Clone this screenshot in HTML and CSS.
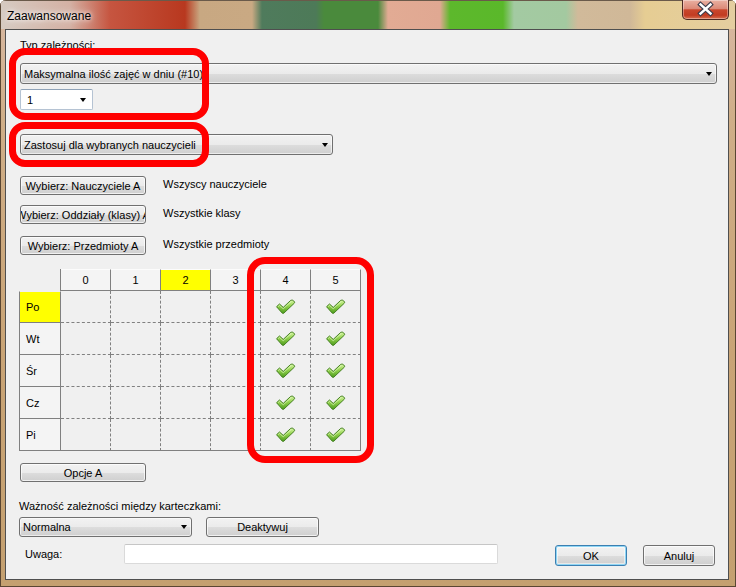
FILE: index.html
```html
<!DOCTYPE html>
<html lang="pl">
<head>
    <meta charset="UTF-8">
    <meta name="viewport" content="width=device-width, initial-scale=1.0">
    <title>Zaawansowane</title>
    <link rel="stylesheet" href="styles.css">
</head>
<body>
    <svg class="defs" width="0" height="0" aria-hidden="true">
        <defs>
            <linearGradient id="tickFill" x1="0" y1="0" x2="0" y2="1">
                <stop offset="0" stop-color="#d8f7a6"/>
                <stop offset="0.45" stop-color="#92d14c"/>
                <stop offset="1" stop-color="#4c9b1c"/>
            </linearGradient>
            <symbol id="tick" viewBox="0 0 22 17">
                <path d="M1.5 8.2 L4.6 5.3 L8.6 8.9 L16.6 1.4 Q18.2 0.6 19.6 1.9 L20.6 3.2 Q20.9 3.9 20.3 4.5 L9.3 15 Q8.4 15.8 7.5 15 Z"
                      fill="url(#tickFill)" stroke="#3e7b1b" stroke-width="1" stroke-linejoin="round"/>
                <path d="M3.2 8.1 L4.6 6.8 L8.6 10.4 L17.4 2.4" fill="none" stroke="#ecffd2" stroke-width="0.8" opacity="0.8"/>
            </symbol>
        </defs>
    </svg>

    <div class="window">
        <div class="titlebar">
            <span class="title">Zaawansowane</span>
            <div class="close-btn">
                <svg width="45" height="18" viewBox="0 0 45 18">
                    <path d="M17.5 4.5 L27.5 13.5 M27.5 4.5 L17.5 13.5" stroke="#3b3b4a" stroke-width="4.6" stroke-linecap="square"/>
                    <path d="M17.5 4.5 L27.5 13.5 M27.5 4.5 L17.5 13.5" stroke="#ffffff" stroke-width="2.4" stroke-linecap="square"/>
                </svg>
            </div>
        </div>

        <div class="client">
            <div class="field-label type-label">Typ zależności:</div>

            <div class="combo combo-type">
                <span class="combo-text">Maksymalna ilość zajęć w dniu (#10)</span>
                <span class="arrow"></span>
            </div>

            <div class="edit-combo">
                <span class="combo-text">1</span>
                <span class="arrow"></span>
            </div>

            <div class="combo combo-apply">
                <span class="combo-text">Zastosuj dla wybranych nauczycieli</span>
                <span class="arrow"></span>
            </div>

            <div class="pick-row pick-first">
                <button class="btn btn-pick"><span>Wybierz: Nauczyciele A</span></button>
                <span class="pick-value">Wszyscy nauczyciele</span>
            </div>
            <div class="pick-row pick-second">
                <button class="btn btn-pick"><span>Wybierz: Oddziały (klasy) A</span></button>
                <span class="pick-value">Wszystkie klasy</span>
            </div>
            <div class="pick-row pick-third">
                <button class="btn btn-pick"><span>Wybierz: Przedmioty A</span></button>
                <span class="pick-value">Wszystkie przedmioty</span>
            </div>

            <div class="hours">
                <div class="corner"></div>
                <div class="hd">0</div>
                <div class="hd">1</div>
                <div class="hd today">2</div>
                <div class="hd">3</div>
                <div class="hd">4</div>
                <div class="hd">5</div>

                <div class="rh active">Po</div>
                <div class="cell"></div><div class="cell"></div><div class="cell"></div><div class="cell"></div>
                <div class="cell"><svg class="tick"><use href="#tick"/></svg></div>
                <div class="cell"><svg class="tick"><use href="#tick"/></svg></div>

                <div class="rh">Wt</div>
                <div class="cell"></div><div class="cell"></div><div class="cell"></div><div class="cell"></div>
                <div class="cell"><svg class="tick"><use href="#tick"/></svg></div>
                <div class="cell"><svg class="tick"><use href="#tick"/></svg></div>

                <div class="rh">Śr</div>
                <div class="cell"></div><div class="cell"></div><div class="cell"></div><div class="cell"></div>
                <div class="cell"><svg class="tick"><use href="#tick"/></svg></div>
                <div class="cell"><svg class="tick"><use href="#tick"/></svg></div>

                <div class="rh">Cz</div>
                <div class="cell"></div><div class="cell"></div><div class="cell"></div><div class="cell"></div>
                <div class="cell"><svg class="tick"><use href="#tick"/></svg></div>
                <div class="cell"><svg class="tick"><use href="#tick"/></svg></div>

                <div class="rh">Pi</div>
                <div class="cell"></div><div class="cell"></div><div class="cell"></div><div class="cell"></div>
                <div class="cell"><svg class="tick"><use href="#tick"/></svg></div>
                <div class="cell"><svg class="tick"><use href="#tick"/></svg></div>
            </div>

            <button class="btn btn-options"><span>Opcje A</span></button>

            <div class="field-label importance-label">Ważność zależności między karteczkami:</div>
            <div class="importance-row">
                <div class="combo combo-importance">
                    <span class="combo-text">Normalna</span>
                    <span class="arrow"></span>
                </div>
                <button class="btn btn-deactivate"><span>Deaktywuj</span></button>
            </div>

            <div class="note-row">
                <label class="note-label" for="note">Uwaga:</label>
                <input class="note-input" id="note" type="text">
                <button class="btn btn-ok"><span>OK</span></button>
                <button class="btn btn-cancel"><span>Anuluj</span></button>
            </div>
        </div>

        <!-- red highlights drawn over the dialog -->
        <div class="mark mark-type"></div>
        <div class="mark mark-apply"></div>
        <div class="mark mark-hours"></div>
    </div>
</body>
</html>
```

FILE: styles.css
```css
* {
    box-sizing: border-box;
}

body {
    margin: 0;
    font-family: "Liberation Sans", Arial, sans-serif;
    font-size: 11px;
    color: #000;
}

.defs {
    position: absolute;
}

.window {
    position: relative;
    width: 736px;
    height: 587px;
    display: flex;
    flex-direction: column;
    overflow: hidden;
    border-radius: 6px 6px 0 0;
    background: linear-gradient(to bottom, #d9b9a4 0%, #cfae88 20%, #c9a476 60%, #c4a070 100%);
    box-shadow: inset 0 0 0 1px #5a4632;
}

.titlebar {
    height: 29px;
    flex: none;
    display: flex;
    align-items: flex-start;
    padding-left: 7px;
    background: linear-gradient(to right,
        #d6cbc2 0px, #d4b1a4 70px, #c65540 110px, #b8381f 185px,
        #c8a882 200px, #c9a983 252px, #4f7b5c 262px, #4d7a58 316px,
        #4a8a3c 324px, #4a8a3c 378px, #e2ab94 388px, #e0a892 440px,
        #5db82c 450px, #5ab82a 503px, #a3caa2 514px, #a3c9a0 566px,
        #d1ba9a 578px, #d0b898 630px, #e6cd93 645px, #e4cea0 736px);
    box-shadow: inset 0 1px 0 #6a5a4a, inset 1px 0 0 #5a4632, inset -1px 0 0 #5a4632;
}

.title {
    margin-top: 9px;
    font-size: 12px;
    line-height: 14px;
    color: #000;
    text-shadow: 0 0 4px #fff, 0 0 8px rgba(255, 255, 255, 0.9);
}

.close-btn {
    margin-left: auto;
    margin-right: 7px;
    width: 47px;
    height: 20px;
    border: 1px solid #4b2a22;
    border-top: none;
    border-radius: 0 0 5px 5px;
    background: linear-gradient(to bottom, #eab1a2 0%, #dc8a78 45%, #c9472d 52%, #c23b22 80%, #d8704f 100%);
    box-shadow: inset 0 0 0 1px rgba(255, 255, 255, 0.35);
}

.close-btn svg {
    display: block;
}

.client {
    flex: 1;
    margin: 0 7px 7px 5px;
    border: 1px solid #4f4f4f;
    background: #f0f0f0;
    padding: 8px 11px 0 14px;
    display: flex;
    flex-direction: column;
    align-items: flex-start;
}

.field-label {
    line-height: 14px;
    white-space: nowrap;
}

/* combo boxes */
.combo {
    height: 21px;
    display: flex;
    align-items: center;
    border: 1px solid #707070;
    border-radius: 3px;
    background: linear-gradient(to bottom, #f2f2f2 0%, #ebebeb 50%, #dddddd 51%, #cfcfcf 100%);
    box-shadow: inset 0 0 0 1px rgba(255, 255, 255, 0.6);
    padding-left: 3px;
}

.combo-text {
    flex: 1;
    white-space: nowrap;
    overflow: hidden;
}

.arrow {
    width: 0;
    height: 0;
    margin-right: 4px;
    border-left: 3.5px solid transparent;
    border-right: 3.5px solid transparent;
    border-top: 4px solid #000;
}

.combo-type {
    margin-top: 11px;
    width: 697px;
}

.edit-combo {
    margin-top: 5px;
    width: 73px;
    height: 21px;
    display: flex;
    align-items: center;
    padding-left: 6px;
    background: #fff;
    border: 1px solid #b5c3d3;
    border-top-color: #8fa3b8;
    border-radius: 2px;
}

.edit-combo .arrow {
    margin-right: 6px;
}

.combo-apply {
    margin-top: 24px;
    width: 313px;
}

/* buttons */
.btn {
    font-family: inherit;
    font-size: 11px;
    color: #000;
    padding: 0;
    height: 19px;
    display: flex;
    align-items: center;
    justify-content: center;
    overflow: hidden;
    white-space: nowrap;
    border: 1px solid #707070;
    border-radius: 3px;
    background: linear-gradient(to bottom, #f2f2f2 0%, #ebebeb 50%, #dddddd 51%, #cfcfcf 100%);
    box-shadow: inset 0 0 0 1px rgba(255, 255, 255, 0.7);
}

.btn span {
    flex: none;
}

.pick-row {
    display: flex;
    align-items: flex-start;
}

.pick-first {
    margin-top: 21px;
}

.pick-second {
    margin-top: 10px;
}

.pick-third {
    margin-top: 12px;
}

.btn-pick {
    width: 126px;
}

.pick-value {
    margin-left: 17px;
    line-height: 16px;
}

/* hours grid */
.hours {
    margin-top: 14px;
    margin-left: -1px;
    display: grid;
    grid-template-columns: 42px repeat(6, 50px);
    grid-template-rows: 22px repeat(5, 32px);
}

.corner {
    border-right: 1px solid #808080;
}

.hd {
    display: flex;
    align-items: center;
    justify-content: center;
    border-right: 1px solid #808080;
    border-bottom: 1px solid #808080;
    border-top: 1px solid #fcfcfc;
    background: #f4f4f4;
}

.hd.today {
    background: #ffff00;
}

.rh {
    display: flex;
    align-items: center;
    padding-left: 6px;
    border-left: 1px solid #808080;
    border-right: 1px solid #808080;
    border-bottom: 1px solid #808080;
    background: #f4f4f4;
}

.rh.active {
    background: #ffff00;
    border-top: 1px solid #f0f0f0;
}

.cell {
    display: flex;
    align-items: center;
    justify-content: center;
    border-right: 1px dashed #808080;
    border-bottom: 1px dashed #808080;
}

.hours > :nth-child(7n) {
    border-right-style: solid;
}

.cell:nth-last-child(-n+6) {
    border-bottom-style: solid;
}

.tick {
    width: 21px;
    height: 16px;
    margin-top: 1px;
}

.btn-options {
    margin-top: 12px;
    width: 126px;
}

.importance-label {
    margin-top: 17px;
    margin-left: -1px;
}

.importance-row {
    margin-top: 4px;
    margin-left: -1px;
    display: flex;
}

.combo-importance {
    width: 173px;
    height: 20px;
}

.btn-deactivate {
    margin-left: 14px;
    width: 113px;
    height: 20px;
}

.note-row {
    margin-top: 7px;
    display: flex;
    align-items: flex-start;
}

.note-label {
    margin-left: 5px;
    width: 99px;
    line-height: 20px;
}

.note-input {
    width: 374px;
    height: 20px;
    border: 1px solid #dadada;
    border-top-color: #c6c6c6;
    border-radius: 2px;
    background: #fff;
    padding: 0 3px;
    font-family: inherit;
    font-size: 11px;
}

.btn-ok,
.btn-cancel {
    margin-top: 1px;
    width: 72px;
    height: 21px;
}

.btn-ok {
    margin-left: 57px;
    border-color: #3c7fb1;
    box-shadow: inset 0 0 0 1px #8fd6f5, inset 0 0 0 2px rgba(255, 255, 255, 0.5);
}

.btn-cancel {
    margin-left: 16px;
}

/* red highlight frames */
.mark {
    position: absolute;
    border: 7px solid #ff0000;
    border-radius: 16px;
}

.mark-type {
    left: 9px;
    top: 48px;
    width: 200px;
    height: 72px;
}

.mark-apply {
    left: 9px;
    top: 122px;
    width: 200px;
    height: 45px;
}

.mark-hours {
    left: 247px;
    top: 257px;
    width: 127px;
    height: 206px;
    border-radius: 18px;
}
```
